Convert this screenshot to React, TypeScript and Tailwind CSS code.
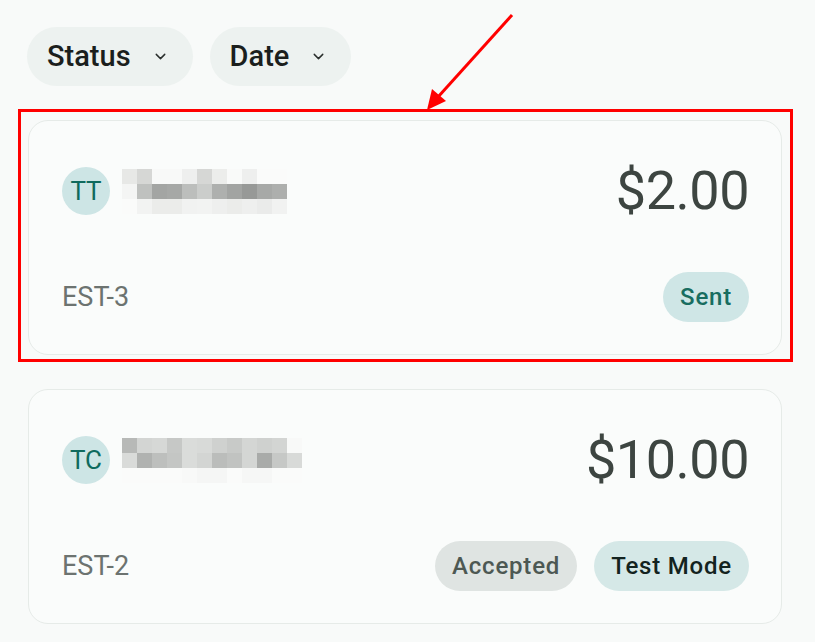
import { ChevronDown } from 'lucide-react';

type Estimate = {
  initials: string;
  number: string;
  amount: string;
  nameBlocks: string[][];
  badges: { label: string; className: string }[];
  highlighted?: boolean;
};

// masked customer names, drawn as a grid of 15px tiles
const nameTT: string[][] = [
  ['bg-[#e7e8e6]', 'bg-[#d6d7d5]', 'bg-[#f8f9f8]', 'bg-[#f8f9f8]', 'bg-[#eeefee]', 'bg-[#d6d7d5]', 'bg-[#ecedeb]', 'bg-[#f9faf9]', 'bg-[#eeefee]', 'bg-[#fafbfa]', 'bg-[#fafbfa]'],
  ['bg-[#f4f5f4]', 'bg-[#bfc1bf]', 'bg-[#a3a5a3]', 'bg-[#a6a8a6]', 'bg-[#bcbebc]', 'bg-[#cbcdcb]', 'bg-[#aeb0ae]', 'bg-[#a2a4a2]', 'bg-[#979997]', 'bg-[#a7a9a7]', 'bg-[#adafad]'],
  ['bg-[#fafbfa]', 'bg-[#f2f3f2]', 'bg-[#ebecea]', 'bg-[#ebecea]', 'bg-[#f1f2f1]', 'bg-[#f2f3f2]', 'bg-[#eeefee]', 'bg-[#ebecea]', 'bg-[#eeefee]', 'bg-[#eaebea]', 'bg-[#f1f2f1]'],
];

const nameTC: string[][] = [
  ['bg-[#b7b9b7]', 'bg-[#d3d5d3]', 'bg-[#d6d8d6]', 'bg-[#c6c8c6]', 'bg-[#dadcda]', 'bg-[#d8dad8]', 'bg-[#cfd1cf]', 'bg-[#c8cac8]', 'bg-[#d4d6d4]', 'bg-[#cfd1cf]', 'bg-[#d3d5d3]', 'bg-[#f8f9f8]'],
  ['bg-[#d9dbd9]', 'bg-[#b0b2b0]', 'bg-[#bdbfbd]', 'bg-[#c4c6c4]', 'bg-[#dadcda]', 'bg-[#d3d5d3]', 'bg-[#bbbdbb]', 'bg-[#c1c3c1]', 'bg-[#d4d6d4]', 'bg-[#a9aba9]', 'bg-[#c6c8c6]', 'bg-[#d8dad8]'],
  ['bg-[#fafbfa]', 'bg-[#fafbfa]', 'bg-[#fafbfa]', 'bg-[#fafbfa]', 'bg-[#f8f9f8]', 'bg-[#f5f6f5]', 'bg-[#f5f6f5]', 'bg-[#fafbfa]', 'bg-[#f6f7f6]', 'bg-[#f6f7f6]', 'bg-[#fafbfa]', 'bg-[#fafbfa]'],
];

const estimates: Estimate[] = [
  {
    initials: 'TT',
    number: 'EST-3',
    amount: '$2.00',
    nameBlocks: nameTT,
    badges: [{ label: 'Sent', className: 'bg-[#cfe6e6] text-[#186d60]' }],
    highlighted: true,
  },
  {
    initials: 'TC',
    number: 'EST-2',
    amount: '$10.00',
    nameBlocks: nameTC,
    badges: [
      { label: 'Accepted', className: 'bg-[#dfe4e2] text-[#4d5853]' },
      { label: 'Test Mode', className: 'bg-[#d5e8e7] text-[#132320]' },
    ],
  },
];

function FilterChip({ label }: { label: string }) {
  return (
    <button
      type="button"
      className="h-[59px] pl-5 pr-6 rounded-full bg-[#edf2f0] flex items-center gap-[21px] text-[29px] font-medium text-[#1b1f1d]"
    >
      {label}
      <ChevronDown className="w-[17px] h-[17px] text-[#2a2f2d]" strokeWidth={2} />
    </button>
  );
}

function MaskedName({ rows }: { rows: string[][] }) {
  return (
    <div className="flex flex-col">
      {rows.map((row, i) => (
        <div key={i} className="flex">
          {row.map((cls, j) => (
            <div key={j} className={`w-[15px] h-[15px] ${cls}`} />
          ))}
        </div>
      ))}
    </div>
  );
}

function EstimateCard({ estimate }: { estimate: Estimate }) {
  return (
    <div className="relative">
      <div className="h-[235px] rounded-[20px] border border-[#e6ebe8] bg-[#fafcfb] pl-[33px] pr-[32px] pt-[43px] pb-[32px] flex flex-col justify-between">
        <div className="flex items-center justify-between">
          <div className="flex items-center gap-3">
            <div className="w-[48px] h-[48px] rounded-full bg-[#cde5e5] text-[#0f6a5d] text-[26px] flex items-center justify-center">
              {estimate.initials}
            </div>
            <MaskedName rows={estimate.nameBlocks} />
          </div>
          <div className="text-[54px] leading-none text-[#3d4541] tracking-[-0.5px]">{estimate.amount}</div>
        </div>
        <div className="flex items-center justify-between">
          <div className="text-[27px] text-[#6c7370]">{estimate.number}</div>
          <div className="flex items-center gap-[17px]">
            {estimate.badges.map((b) => (
              <span
                key={b.label}
                className={`h-[50px] px-[17px] rounded-full flex items-center text-[24px] font-medium tracking-[0.8px] ${b.className}`}
              >
                {b.label}
              </span>
            ))}
          </div>
        </div>
      </div>
      {estimate.highlighted && (
        <div className="absolute -left-[10px] -right-[11px] -top-[11px] -bottom-[7px] border-[3px] border-[#ff0000] pointer-events-none" />
      )}
    </div>
  );
}

export default function App() {
  return (
    <div
      className="relative w-[815px] h-[642px] overflow-hidden bg-[#f8faf9] pl-[27px] pr-[33px] pt-[27px]"
      style={{ fontFamily: 'Roboto, "Noto Sans", sans-serif' }}
    >
      <div className="flex gap-[17px]">
        <FilterChip label="Status" />
        <FilterChip label="Date" />
      </div>
      <div className="mt-[34px] ml-px flex flex-col gap-[34px]">
        {estimates.map((e) => (
          <EstimateCard key={e.number} estimate={e} />
        ))}
      </div>
      {/* annotation arrow */}
      <svg className="absolute left-0 top-0 pointer-events-none" width="815" height="130">
        <line x1="512" y1="15" x2="438" y2="97" stroke="#ff0000" strokeWidth="3" />
        <polygon points="427,110 432,89 446,101" fill="#ff0000" />
      </svg>
    </div>
  );
}
